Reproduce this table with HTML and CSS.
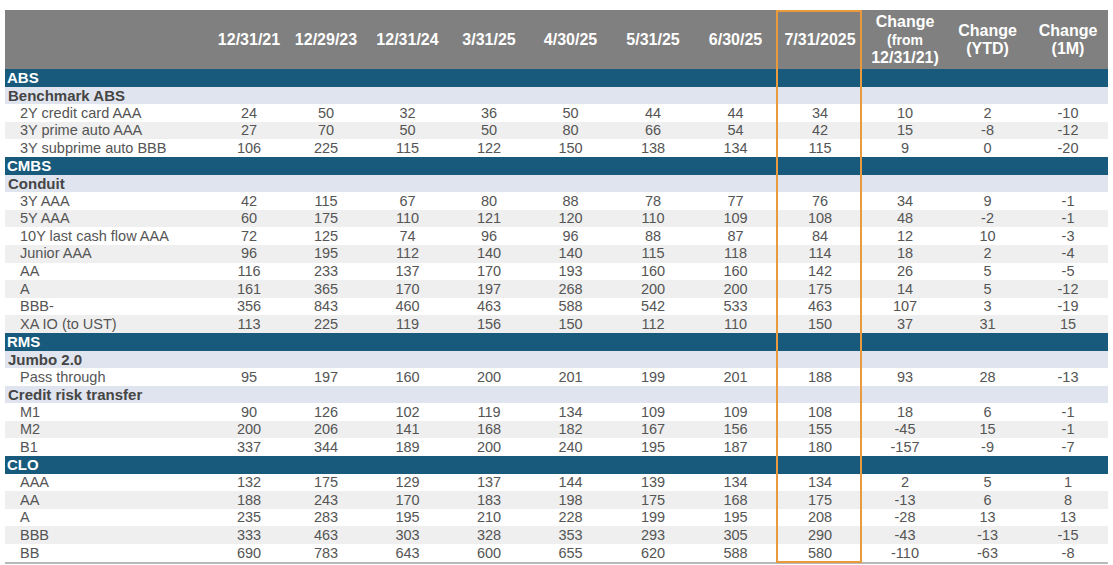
FILE: index.html
```html
<!DOCTYPE html>
<html>
<head>
<meta charset="utf-8">
<link rel="stylesheet" href="styles.css">
</head>
<body>
<div class="table">
  <div class="row head">
    <span class="lbl"></span>
    <span>12/31/21</span><span>12/29/23</span><span>12/31/24</span><span>3/31/25</span><span>4/30/25</span><span>5/31/25</span><span>6/30/25</span><span>7/31/2025</span>
    <span class="stack"><b>Change</b><b class="small">(from</b><b>12/31/21)</b></span>
    <span class="stack"><b>Change</b><b>(YTD)</b></span>
    <span class="stack"><b>Change</b><b>(1M)</b></span>
  </div>

  <div class="row sec"><span class="lbl">ABS</span></div>
  <div class="row sub"><span class="lbl">Benchmark ABS</span></div>
  <div class="row"><span class="lbl">2Y credit card AAA</span><span>24</span><span>50</span><span>32</span><span>36</span><span>50</span><span>44</span><span>44</span><span>34</span><span>10</span><span>2</span><span>-10</span></div>
  <div class="row alt"><span class="lbl">3Y prime auto AAA</span><span>27</span><span>70</span><span>50</span><span>50</span><span>80</span><span>66</span><span>54</span><span>42</span><span>15</span><span>-8</span><span>-12</span></div>
  <div class="row"><span class="lbl">3Y subprime auto BBB</span><span>106</span><span>225</span><span>115</span><span>122</span><span>150</span><span>138</span><span>134</span><span>115</span><span>9</span><span>0</span><span>-20</span></div>

  <div class="row sec"><span class="lbl">CMBS</span></div>
  <div class="row sub"><span class="lbl">Conduit</span></div>
  <div class="row"><span class="lbl">3Y AAA</span><span>42</span><span>115</span><span>67</span><span>80</span><span>88</span><span>78</span><span>77</span><span>76</span><span>34</span><span>9</span><span>-1</span></div>
  <div class="row alt"><span class="lbl">5Y AAA</span><span>60</span><span>175</span><span>110</span><span>121</span><span>120</span><span>110</span><span>109</span><span>108</span><span>48</span><span>-2</span><span>-1</span></div>
  <div class="row"><span class="lbl">10Y last cash flow AAA</span><span>72</span><span>125</span><span>74</span><span>96</span><span>96</span><span>88</span><span>87</span><span>84</span><span>12</span><span>10</span><span>-3</span></div>
  <div class="row alt"><span class="lbl">Junior AAA</span><span>96</span><span>195</span><span>112</span><span>140</span><span>140</span><span>115</span><span>118</span><span>114</span><span>18</span><span>2</span><span>-4</span></div>
  <div class="row"><span class="lbl">AA</span><span>116</span><span>233</span><span>137</span><span>170</span><span>193</span><span>160</span><span>160</span><span>142</span><span>26</span><span>5</span><span>-5</span></div>
  <div class="row alt"><span class="lbl">A</span><span>161</span><span>365</span><span>170</span><span>197</span><span>268</span><span>200</span><span>200</span><span>175</span><span>14</span><span>5</span><span>-12</span></div>
  <div class="row"><span class="lbl">BBB-</span><span>356</span><span>843</span><span>460</span><span>463</span><span>588</span><span>542</span><span>533</span><span>463</span><span>107</span><span>3</span><span>-19</span></div>
  <div class="row alt"><span class="lbl">XA IO (to UST)</span><span>113</span><span>225</span><span>119</span><span>156</span><span>150</span><span>112</span><span>110</span><span>150</span><span>37</span><span>31</span><span>15</span></div>

  <div class="row sec"><span class="lbl">RMS</span></div>
  <div class="row sub"><span class="lbl">Jumbo 2.0</span></div>
  <div class="row"><span class="lbl">Pass through</span><span>95</span><span>197</span><span>160</span><span>200</span><span>201</span><span>199</span><span>201</span><span>188</span><span>93</span><span>28</span><span>-13</span></div>
  <div class="row sub"><span class="lbl">Credit risk transfer</span></div>
  <div class="row"><span class="lbl">M1</span><span>90</span><span>126</span><span>102</span><span>119</span><span>134</span><span>109</span><span>109</span><span>108</span><span>18</span><span>6</span><span>-1</span></div>
  <div class="row alt"><span class="lbl">M2</span><span>200</span><span>206</span><span>141</span><span>168</span><span>182</span><span>167</span><span>156</span><span>155</span><span>-45</span><span>15</span><span>-1</span></div>
  <div class="row"><span class="lbl">B1</span><span>337</span><span>344</span><span>189</span><span>200</span><span>240</span><span>195</span><span>187</span><span>180</span><span>-157</span><span>-9</span><span>-7</span></div>

  <div class="row sec"><span class="lbl">CLO</span></div>
  <div class="row"><span class="lbl">AAA</span><span>132</span><span>175</span><span>129</span><span>137</span><span>144</span><span>139</span><span>134</span><span>134</span><span>2</span><span>5</span><span>1</span></div>
  <div class="row alt"><span class="lbl">AA</span><span>188</span><span>243</span><span>170</span><span>183</span><span>198</span><span>175</span><span>168</span><span>175</span><span>-13</span><span>6</span><span>8</span></div>
  <div class="row"><span class="lbl">A</span><span>235</span><span>283</span><span>195</span><span>210</span><span>228</span><span>199</span><span>195</span><span>208</span><span>-28</span><span>13</span><span>13</span></div>
  <div class="row alt"><span class="lbl">BBB</span><span>333</span><span>463</span><span>303</span><span>328</span><span>353</span><span>293</span><span>305</span><span>290</span><span>-43</span><span>-13</span><span>-15</span></div>
  <div class="row"><span class="lbl">BB</span><span>690</span><span>783</span><span>643</span><span>600</span><span>655</span><span>620</span><span>588</span><span>580</span><span>-110</span><span>-63</span><span>-8</span></div>

  <div class="highlight"></div>
</div>
</body>
</html>
```

FILE: styles.css
```css
html, body {
  margin: 0;
  padding: 0;
  background: #ffffff;
}

body {
  font-family: "Liberation Sans", Arial, sans-serif;
  color: #555555;
}

.table {
  position: relative;
  width: 1103px;
  margin: 10px 0 0 5px;
  border-bottom: 2px solid #b9b9b9;
}

.row {
  display: grid;
  grid-template-columns: 207px 74px 80px 83px 80px 83px 82px 83px 86px 84px 81px 80px;
  height: 17.6px;
  font-size: 14.5px;
  background: #ffffff;
}

.row > span {
  display: flex;
  align-items: center;
  justify-content: center;
  white-space: nowrap;
  line-height: 1;
}

.row > .lbl {
  justify-content: flex-start;
  padding-left: 15px;
}

.row.alt {
  background: #efefef;
}

.row.head {
  height: 59px;
  background: #808080;
  color: #ffffff;
  font-weight: bold;
  font-size: 16px;
}

.row.head > .stack {
  flex-direction: column;
  line-height: 18px;
}

.row.head .small {
  font-size: 14px;
}

.row.sec {
  background: #175a7b;
  color: #ffffff;
  font-weight: bold;
  font-size: 15px;
}

.row.sec > .lbl {
  padding-left: 2px;
}

.row.sub {
  background: #dfe4ee;
  color: #454545;
  font-weight: bold;
  font-size: 15px;
}

.row.sub > .lbl {
  padding-left: 3px;
}

.highlight {
  position: absolute;
  left: 771px;
  top: 0;
  width: 86px;
  height: 553px;
  box-sizing: border-box;
  border: 2px solid #e89a3c;
  pointer-events: none;
}
```
